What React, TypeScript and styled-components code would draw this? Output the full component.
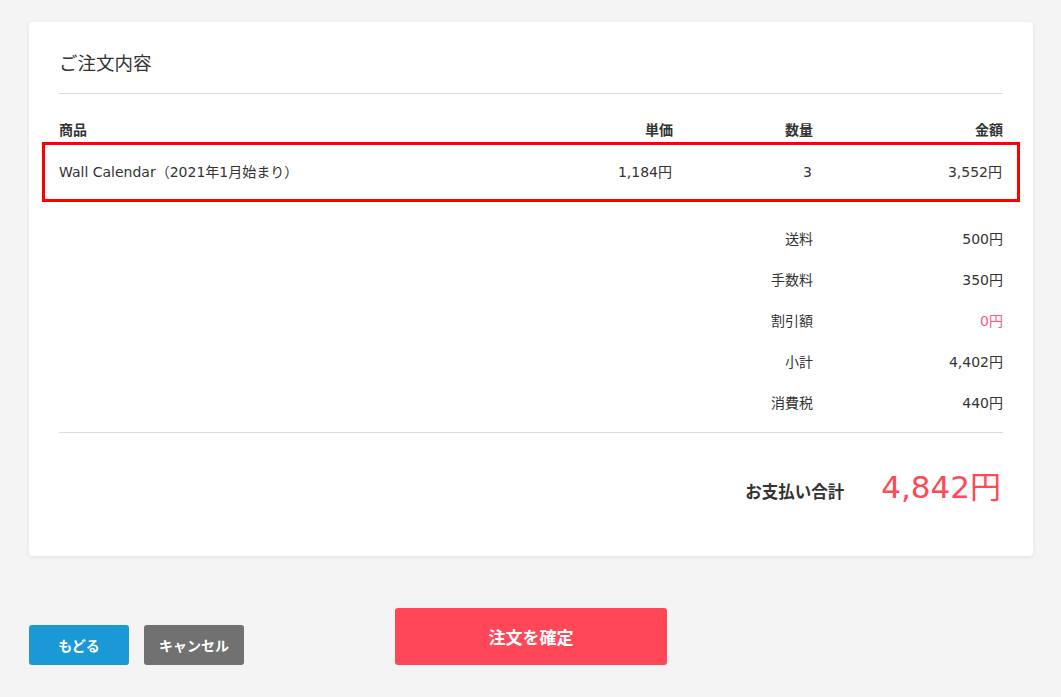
import React from 'react';
import styled, { createGlobalStyle } from 'styled-components';

const FONT = `"DejaVu Sans", "Noto Sans CJK JP", sans-serif`;

const GlobalStyle = createGlobalStyle`
  html, body {
    margin: 0;
    padding: 0;
    background: #f4f4f4;
  }
  body {
    font-family: ${FONT};
    color: #333;
  }
`;

const fees = [
  { label: '送料', value: '500円' },
  { label: '手数料', value: '350円' },
  { label: '割引額', value: '0円', discount: true },
  { label: '小計', value: '4,402円' },
  { label: '消費税', value: '440円' },
];

const App: React.FC = () => {
  return (
    <Page>
      <GlobalStyle />
      <Card>
        <Title>ご注文内容</Title>

        <HeaderRow>
          <Cell>商品</Cell>
          <Cell $right>単価</Cell>
          <Cell $right>数量</Cell>
          <Cell $right>金額</Cell>
        </HeaderRow>

        <ItemRow>
          <Cell>Wall Calendar（2021年1月始まり）</Cell>
          <Cell $right>1,184円</Cell>
          <Cell $right>3</Cell>
          <Cell $right>3,552円</Cell>
        </ItemRow>

        <Summary>
          {fees.map((f) => (
            <SummaryRow key={f.label}>
              <SummaryLabel>{f.label}</SummaryLabel>
              <SummaryValue $discount={f.discount}>{f.value}</SummaryValue>
            </SummaryRow>
          ))}
        </Summary>

        <TotalRow>
          <TotalLabel>お支払い合計</TotalLabel>
          <TotalValue>4,842円</TotalValue>
        </TotalRow>
      </Card>

      <Actions>
        <SmallButton $color="#1b98d6">もどる</SmallButton>
        <SmallButton $color="#717171">キャンセル</SmallButton>
        <ConfirmButton>注文を確定</ConfirmButton>
      </Actions>
    </Page>
  );
};

const Page = styled.div`
  padding: 22px 28px 0 29px;
`;

const Card = styled.div`
  background: #fff;
  border-radius: 4px;
  box-shadow: 0 1px 4px rgba(0, 0, 0, 0.08);
  padding: 30px 30px 30px;
`;

const Title = styled.h2`
  margin: 0;
  font-size: 18.5px;
  font-weight: normal;
  line-height: 24px;
  padding-bottom: 17px;
  border-bottom: 1px solid #ddd;
`;

const columns = `
  display: grid;
  grid-template-columns: 1fr 140px 140px 190px;
  align-items: center;
`;

const HeaderRow = styled.div`
  ${columns}
  margin-top: 25px;
  margin-bottom: 3px;
  height: 20px;
  font-size: 14px;
  font-weight: bold;
`;

const ItemRow = styled.div`
  ${columns}
  height: 54px;
  margin: 0 -17px;
  padding: 0 15px 0 14px;
  border: 3px solid #ff0000;
  font-size: 14px;
  line-height: 18px;
`;

const Cell = styled.div<{ $right?: boolean }>`
  text-align: ${({ $right }) => ($right ? 'right' : 'left')};
  white-space: nowrap;
`;

const Summary = styled.div`
  margin-top: 15px;
  padding-bottom: 10px;
  border-bottom: 1px solid #ddd;
`;

const SummaryRow = styled.div`
  display: grid;
  grid-template-columns: 1fr 190px;
  align-items: center;
  height: 41px;
  font-size: 14px;
`;

const SummaryLabel = styled.div`
  text-align: right;
`;

const SummaryValue = styled.div<{ $discount?: boolean }>`
  text-align: right;
  color: ${({ $discount }) => ($discount ? '#ff5a7a' : '#333')};
`;

const TotalRow = styled.div`
  display: flex;
  justify-content: flex-end;
  align-items: baseline;
  gap: 37px;
  padding: 34px 2px 19px 0;
`;

const TotalLabel = styled.div`
  font-size: 16.5px;
  font-weight: bold;
`;

const TotalValue = styled.div`
  font-size: 31px;
  line-height: 40px;
  color: #ff4a55;
`;

const Actions = styled.div`
  display: flex;
  align-items: flex-end;
  margin-top: 52px;
`;

const SmallButton = styled.button<{ $color: string }>`
  width: 100px;
  height: 40px;
  margin-right: 15px;
  border: none;
  border-radius: 3px;
  background: ${({ $color }) => $color};
  color: #fff;
  font-family: ${FONT};
  font-size: 14px;
  font-weight: bold;
  cursor: pointer;
`;

const ConfirmButton = styled.button`
  width: 272px;
  height: 57px;
  margin-left: 136px;
  border: none;
  border-radius: 3px;
  background: #ff4757;
  color: #fff;
  font-family: ${FONT};
  font-size: 17px;
  font-weight: bold;
  cursor: pointer;
`;

export default App;
